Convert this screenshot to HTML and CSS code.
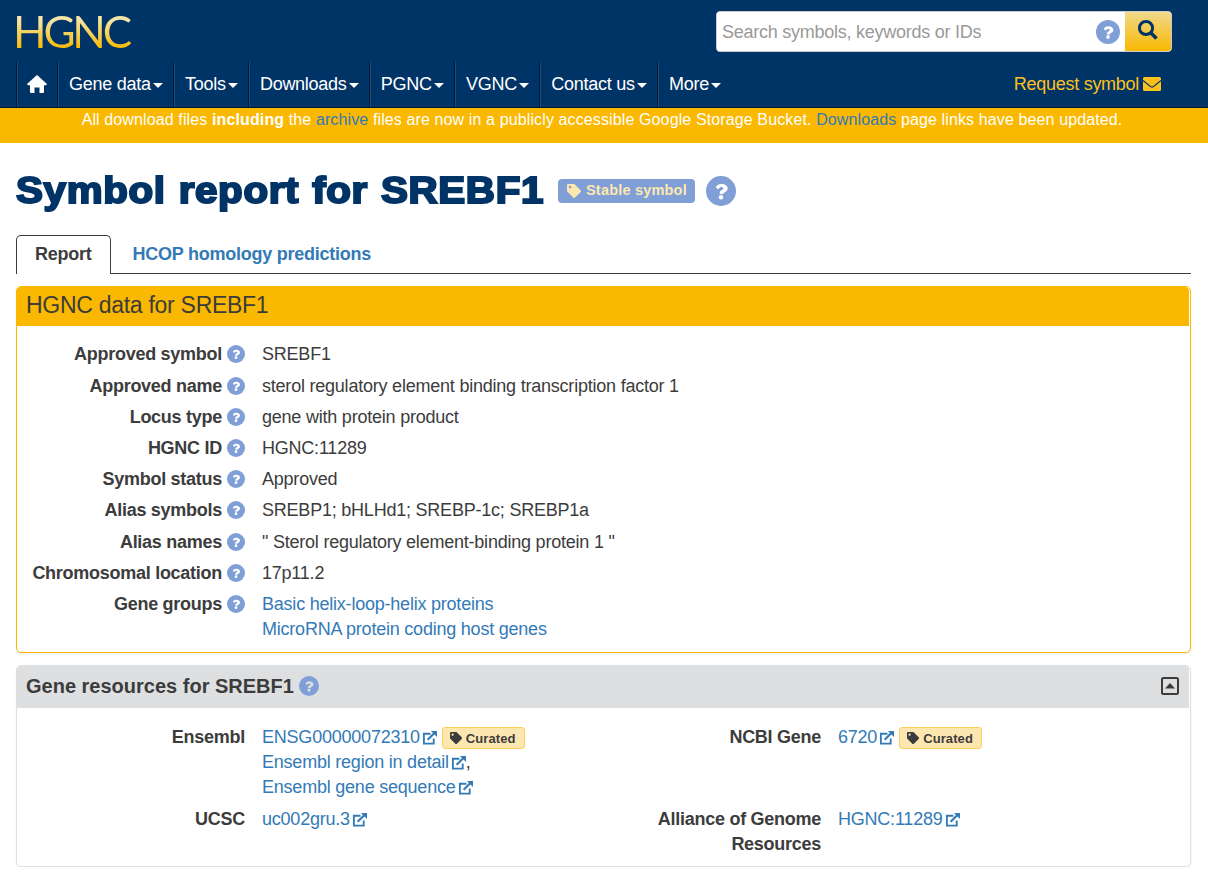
FILE: index.html
```
<!DOCTYPE html>
<html lang="en">

<head>
    <meta charset="UTF-8">
    <meta name="viewport" content="width=device-width, initial-scale=1.0">
    <title>Symbol report for SREBF1 | HGNC</title>
    <link rel="stylesheet" href="styles.css">
</head>

<body>
    <!-- shared icons -->
    <svg class="sprite" width="0" height="0">
        <symbol id="help" viewBox="0 0 512 512">
            <circle cx="256" cy="256" r="256" fill="#809fd6" />
            <path transform="translate(39 35) scale(.85)" d="M262 118c-50 0-83 21-108 59-4 5-3 12 2 16l35 27c5 4 12 3 16-2 18-23 30-36 57-36 20 0 38 12 38 29 0 12-9 18-27 28-21 11-47 26-47 66v4c0 7 6 12 12 12h56c7 0 12-5 12-12v-2c0-25 82-28 82-97 0-52-54-92-128-92zm-6 220a46 46 0 1 0 0 92 46 46 0 0 0 0-92z" />
        </symbol>
        <symbol id="tag" viewBox="0 0 512 512">
            <path fill="currentColor" fill-rule="evenodd" d="M0 252V48C0 21 21 0 48 0h204c13 0 25 5 34 14l212 212c19 19 19 49 0 68L294 498c-19 19-49 19-68 0L14 286c-9-9-14-21-14-34zM112 64a48 48 0 1 0 0 96 48 48 0 0 0 0-96z" />
        </symbol>
        <symbol id="external" viewBox="0 0 16 16">
            <path fill="none" stroke="currentColor" stroke-width="2" d="M9 4H2v10.500h10.500V9" />
            <path fill="none" stroke="currentColor" stroke-width="2.300" d="M6 10.500l7-7" />
            <path fill="currentColor" d="M9.500 1H16v6.500z" />
        </symbol>
    </svg>

    <header>
        <div class="topBar">
            <a class="logo">HGNC</a>
            <form class="search">
                <input type="text" placeholder="Search symbols, keywords or IDs">
                <svg class="help"><use href="#help" /></svg>
                <button type="button" aria-label="Search">
                    <svg width="22" height="22" viewBox="0 0 22 22">
                        <circle cx="9" cy="9" r="6.600" fill="none" stroke="#003366" stroke-width="3" />
                        <path d="M13.500 13.500l6 6" stroke="#003366" stroke-width="3.600" />
                    </svg>
                </button>
            </form>
        </div>
        <nav>
            <ul>
                <li class="home">
                    <svg width="20" height="18" viewBox="0 0 20 18">
                        <path fill="#fff" d="M10 0l10 9-.8 1.200H17V17q0 1-1 1h-3.500v-5.500h-5V18H4q-1 0-1-1v-6.800H.8L0 9z" />
                    </svg>
                </li>
                <li>Gene data<span class="caret"></span></li>
                <li>Tools<span class="caret"></span></li>
                <li>Downloads<span class="caret"></span></li>
                <li>PGNC<span class="caret"></span></li>
                <li>VGNC<span class="caret"></span></li>
                <li>Contact us<span class="caret"></span></li>
                <li>More<span class="caret"></span></li>
            </ul>
            <a class="request">Request symbol
                <svg width="18" height="14" viewBox="0 0 18 14">
                    <rect width="18" height="14" rx="1.500" fill="#fcc11d" />
                    <path d="M0 3.500l7.500 6q1.500 1 3 0l7.500-6" fill="none" stroke="#003366" stroke-width="1.100" />
                </svg>
            </a>
        </nav>
    </header>

    <div class="notice">All download files <b>including</b> the <a>archive</a> files are now in a publicly accessible Google Storage Bucket. <a>Downloads</a> page links have been updated.</div>

    <main>
        <div class="title">
            <h1>Symbol report for SREBF1</h1>
            <span class="stable"><svg><use href="#tag" /></svg>Stable symbol</span>
            <svg class="help"><use href="#help" /></svg>
        </div>

        <div class="tabs">
            <a class="tab active">Report</a>
            <a class="tab">HCOP homology predictions</a>
        </div>

        <section class="panel data">
            <h2>HGNC data for SREBF1</h2>
            <dl>
                <dt>Approved symbol<svg class="help"><use href="#help" /></svg></dt>
                <dd>SREBF1</dd>
                <dt>Approved name<svg class="help"><use href="#help" /></svg></dt>
                <dd>sterol regulatory element binding transcription factor 1</dd>
                <dt>Locus type<svg class="help"><use href="#help" /></svg></dt>
                <dd>gene with protein product</dd>
                <dt>HGNC ID<svg class="help"><use href="#help" /></svg></dt>
                <dd>HGNC:11289</dd>
                <dt>Symbol status<svg class="help"><use href="#help" /></svg></dt>
                <dd>Approved</dd>
                <dt>Alias symbols<svg class="help"><use href="#help" /></svg></dt>
                <dd>SREBP1; bHLHd1; SREBP-1c; SREBP1a</dd>
                <dt>Alias names<svg class="help"><use href="#help" /></svg></dt>
                <dd>" Sterol regulatory element-binding protein 1 "</dd>
                <dt>Chromosomal location<svg class="help"><use href="#help" /></svg></dt>
                <dd>17p11.2</dd>
                <dt>Gene groups<svg class="help"><use href="#help" /></svg></dt>
                <dd><a>Basic helix-loop-helix proteins</a><br><a>MicroRNA protein coding host genes</a></dd>
            </dl>
        </section>

        <section class="panel resources">
            <h2>Gene resources for SREBF1<svg class="help"><use href="#help" /></svg>
                <svg class="toggle" viewBox="0 0 18 18">
                    <rect x="1" y="1" width="16" height="16" rx="1.500" fill="none" stroke="#3c3c3c" stroke-width="2" />
                    <path d="M4 11.500l5-5.500 5 5.500z" fill="#3c3c3c" />
                </svg>
            </h2>
            <dl>
                <dt>Ensembl</dt>
                <dd>
                    <a>ENSG00000072310<svg class="ext"><use href="#external" /></svg></a><span class="curated"><svg><use href="#tag" /></svg>Curated</span><br>
                    <a>Ensembl region in detail<svg class="ext"><use href="#external" /></svg></a>,<br>
                    <a>Ensembl gene sequence<svg class="ext"><use href="#external" /></svg></a>
                </dd>
                <dt>NCBI Gene</dt>
                <dd><a>6720<svg class="ext"><use href="#external" /></svg></a><span class="curated"><svg><use href="#tag" /></svg>Curated</span></dd>
                <dt>UCSC</dt>
                <dd><a>uc002gru.3<svg class="ext"><use href="#external" /></svg></a></dd>
                <dt>Alliance of Genome Resources</dt>
                <dd><a>HGNC:11289<svg class="ext"><use href="#external" /></svg></a></dd>
            </dl>
        </section>
    </main>
</body>

</html>
```
FILE: styles.css
```
* {
    box-sizing: border-box;
}

body {
    margin: 0;
    font-family: "Liberation Sans", Arial, sans-serif;
    font-size: 18px;
    line-height: 25.2px;
    letter-spacing: -0.22px;
    color: #3c3c3c;
    background-color: #fff;
}

a {
    color: #337ab7;
    text-decoration: none;
}

.sprite {
    display: block;
}

.help {
    width: 18px;
    height: 18px;
    fill: #fff;
    flex-shrink: 0;
}

header {
    height: 108px;
    background-color: #003366;
    border-bottom: 1px solid #001a33;
}

.topBar {
    display: flex;
    justify-content: space-between;
    height: 62px;
    padding: 11px 36px 0 13px;
}

.logo {
    font-family: Lato, sans-serif;
    font-weight: 400;
    font-size: 44px;
    line-height: 41px;
    letter-spacing: -3.2px;
    background: linear-gradient(#f5e6a8 15%, #fab800 75%);
    -webkit-background-clip: text;
    background-clip: text;
    color: transparent;
    padding-right: 4px;
}

.search {
    display: flex;
    align-items: center;
    width: 456px;
    height: 41px;
    border: 1px solid #ccc;
    border-radius: 4px;
    background-color: #fff;
    overflow: hidden;
}

.search input {
    flex: 1;
    height: 39px;
    padding: 2px 5px 0;
    border: none;
    font: inherit;
    letter-spacing: -0.25px;
}

.search input::placeholder {
    color: #999;
}

.search .help {
    width: 24px;
    height: 24px;
    margin-right: 5px;
}

.search button {
    display: flex;
    align-items: center;
    justify-content: center;
    width: 46px;
    height: 39px;
    padding: 0 0 3px;
    border: none;
    background: linear-gradient(#f0d98c, #fab800);
}

nav {
    display: flex;
    justify-content: space-between;
    height: 45px;
    padding: 0 47px 0 16px;
    line-height: 43px;
    color: #fff;
}

nav ul {
    display: flex;
    margin: 0;
    padding: 0;
    list-style: none;
}

nav li {
    display: flex;
    align-items: center;
    padding: 0 10px 1px 11px;
    border-left: 1px solid #001a33;
    box-shadow: inset 1px 0 #1f4d7a;
    letter-spacing: -0.27px;
}

nav .home {
    padding: 0 10px 2px;
}

.caret {
    margin: 3px 0 0 2.3px;
    border-top: 5px solid #fff;
    border-left: 5px solid transparent;
    border-right: 5px solid transparent;
}

.request {
    display: flex;
    align-items: center;
    gap: 4px;
    padding-bottom: 1px;
    letter-spacing: -0.28px;
    color: #fcc11d;
}

.notice {
    height: 35px;
    padding-right: 4px;
    background-color: #fab800;
    color: #fff;
    font-size: 16px;
    line-height: 23px;
    letter-spacing: 0.12px;
    text-align: center;
}

main {
    padding: 0 17px 0 16px;
}

.title {
    display: flex;
    align-items: center;
    height: 92px;
    padding-top: 4px;
}

/* stretched bold face with a heavier outline */
h1 {
    width: 530px;
    margin: 0 0 1px;
    font-size: 36px;
    letter-spacing: 0.6px;
    word-spacing: 1px;
    white-space: nowrap;
    color: #003366;
    -webkit-text-stroke: 2px #003366;
    transform: scaleX(1.12);
    transform-origin: left;
}

.stable {
    display: flex;
    align-items: center;
    gap: 5px;
    width: 137px;
    height: 24px;
    margin-left: 12px;
    padding: 0 9px;
    border-radius: 4px;
    background-color: #809fd6;
    color: #fde7b0;
    font-size: 14.5px;
    font-weight: bold;
    letter-spacing: 0.2px;
    white-space: nowrap;
}

.stable svg {
    width: 14px;
    height: 14px;
    flex-shrink: 0;
}

.title .help {
    width: 30px;
    height: 30px;
    margin-left: 11px;
}

.tabs {
    display: flex;
    height: 39px;
    border-bottom: 1px solid #3c3c3c;
    font-weight: bold;
    letter-spacing: -0.25px;
}

.tab {
    padding: 7px 22px;
}

.active {
    height: 39px;
    padding: 6px 18px;
    border: 1px solid #3c3c3c;
    border-bottom: none;
    border-radius: 5px 5px 0 0;
    background-color: #fff;
    color: #3c3c3c;
}

.panel {
    margin-top: 12px;
    border: 1px solid #dedfe1;
    border-radius: 5px;
    box-shadow: 0 1px 2px rgba(0, 0, 0, 0.08);
}

.panel h2 {
    display: flex;
    align-items: center;
    margin: 0 1px 0 0;
    padding: 0 10px 0 9px;
    border-radius: 4px 4px 0 0;
}

.data {
    height: 367px;
    border-color: #fab800;
}

.data h2 {
    height: 39px;
    padding-bottom: 2px;
    background-color: #fab800;
    font-size: 23px;
    font-weight: normal;
    letter-spacing: -0.28px;
}

.resources h2 {
    height: 42px;
    background-color: #dedfe1;
    font-size: 20px;
    letter-spacing: 0;
}

.resources h2 .help {
    width: 20px;
    height: 20px;
    margin: 0 0 2px 5px;
    fill: #dedfe1;
}

.toggle {
    width: 18px;
    height: 18px;
    margin: 0 0 2px auto;
}

dl {
    display: grid;
    grid-template-columns: 228px 1fr;
    column-gap: 17px;
    row-gap: 6px;
    margin: 0;
    padding-top: 16.3px;
}

dt {
    font-weight: bold;
    text-align: right;
    letter-spacing: -0.27px;
}

dt .help {
    margin-left: 5px;
    vertical-align: -3px;
}

dd {
    margin: 0;
}

.resources {
    height: 202px;
}

.resources dl {
    grid-template-columns: 228px 370px 172px 1fr;
    padding-top: 17px;
}

.ext {
    width: 15px;
    height: 15px;
    margin-left: 2px;
    vertical-align: -2px;
}

.curated {
    display: inline-flex;
    align-items: center;
    gap: 4px;
    width: 83px;
    height: 22px;
    margin: -1px 0 -1px 5px;
    padding: 0 7px;
    border: 1px solid #fcd15a;
    border-radius: 3px;
    background-color: #fde7b0;
    font-size: 13px;
    font-weight: bold;
    letter-spacing: 0.1px;
    vertical-align: middle;
}

.curated svg {
    width: 12px;
    height: 12px;
}
```
